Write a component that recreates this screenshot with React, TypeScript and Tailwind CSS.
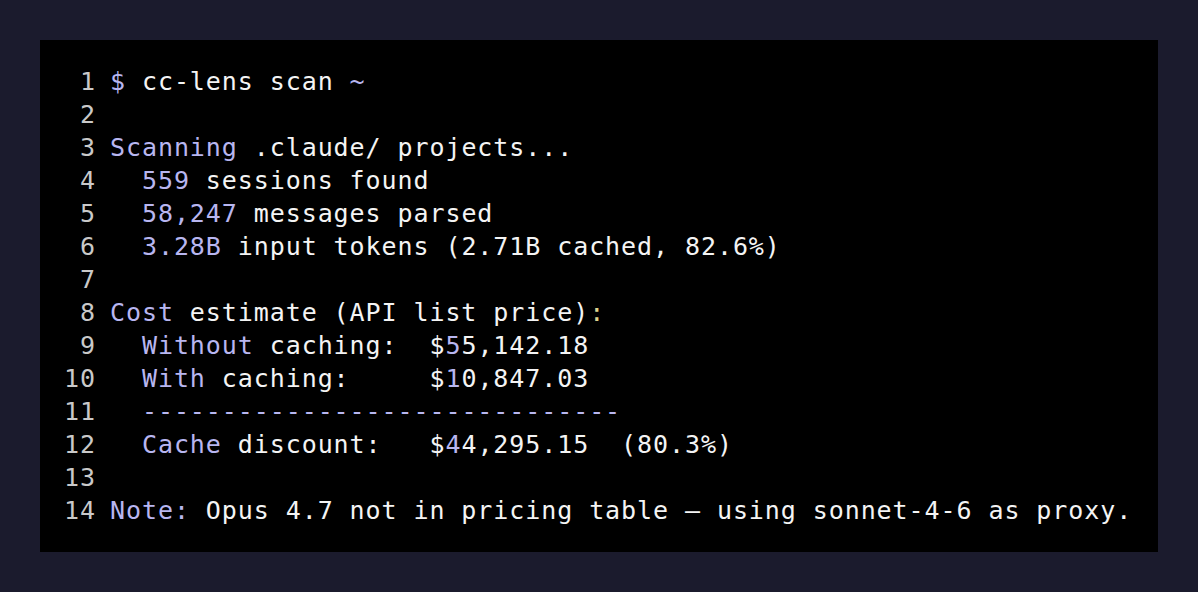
type Seg = { t: string; c?: "hl" | "yel" };

const lines: Seg[][] = [
  [{ t: "$", c: "hl" }, { t: " cc-lens scan " }, { t: "~", c: "hl" }],
  [],
  [{ t: "Scanning", c: "hl" }, { t: " .claude/ projects..." }],
  [{ t: "  " }, { t: "559", c: "hl" }, { t: " sessions found" }],
  [{ t: "  " }, { t: "58,247", c: "hl" }, { t: " messages parsed" }],
  [{ t: "  " }, { t: "3.28B", c: "hl" }, { t: " input tokens (2.71B cached, 82.6%)" }],
  [],
  [{ t: "Cost", c: "hl" }, { t: " estimate (API list price)" }, { t: ":", c: "yel" }],
  [{ t: "  " }, { t: "Without", c: "hl" }, { t: " caching:  $" }, { t: "5", c: "hl" }, { t: "5,142.18" }],
  [{ t: "  " }, { t: "With", c: "hl" }, { t: " caching:     $" }, { t: "1", c: "hl" }, { t: "0,847.03" }],
  [{ t: "  " }, { t: "------------------------------", c: "hl" }],
  [{ t: "  " }, { t: "Cache", c: "hl" }, { t: " discount:   $" }, { t: "4", c: "hl" }, { t: "4,295.15  (80.3%)" }],
  [],
  [{ t: "Note:", c: "hl" }, { t: " Opus 4.7 not in pricing table — using sonnet-4-6 as proxy." }],
];

const color = (c?: Seg["c"]) =>
  c === "hl" ? "text-[#b8b6f0]" : c === "yel" ? "text-[#ded58f]" : "text-[#f4f4f4]";

export default function App() {
  return (
    <div className="min-h-screen w-full bg-[#1b1b2d] p-10">
      <div
        className="bg-black py-[25px] pl-6 text-[25px] leading-[33px] tracking-[0.92px] whitespace-pre"
        style={{ fontFamily: '"DejaVu Sans Mono", "Liberation Mono", monospace' }}
      >
        {lines.map((segs, i) => (
          <div key={i} className="flex h-[33px]">
            <span className="w-8 shrink-0 text-right text-[#c9c9c9]">{i + 1}</span>
            <span className="ml-[14px]">
              {segs.map((s, j) => (
                <span key={j} className={color(s.c)}>
                  {s.t}
                </span>
              ))}
            </span>
          </div>
        ))}
      </div>
    </div>
  );
}
